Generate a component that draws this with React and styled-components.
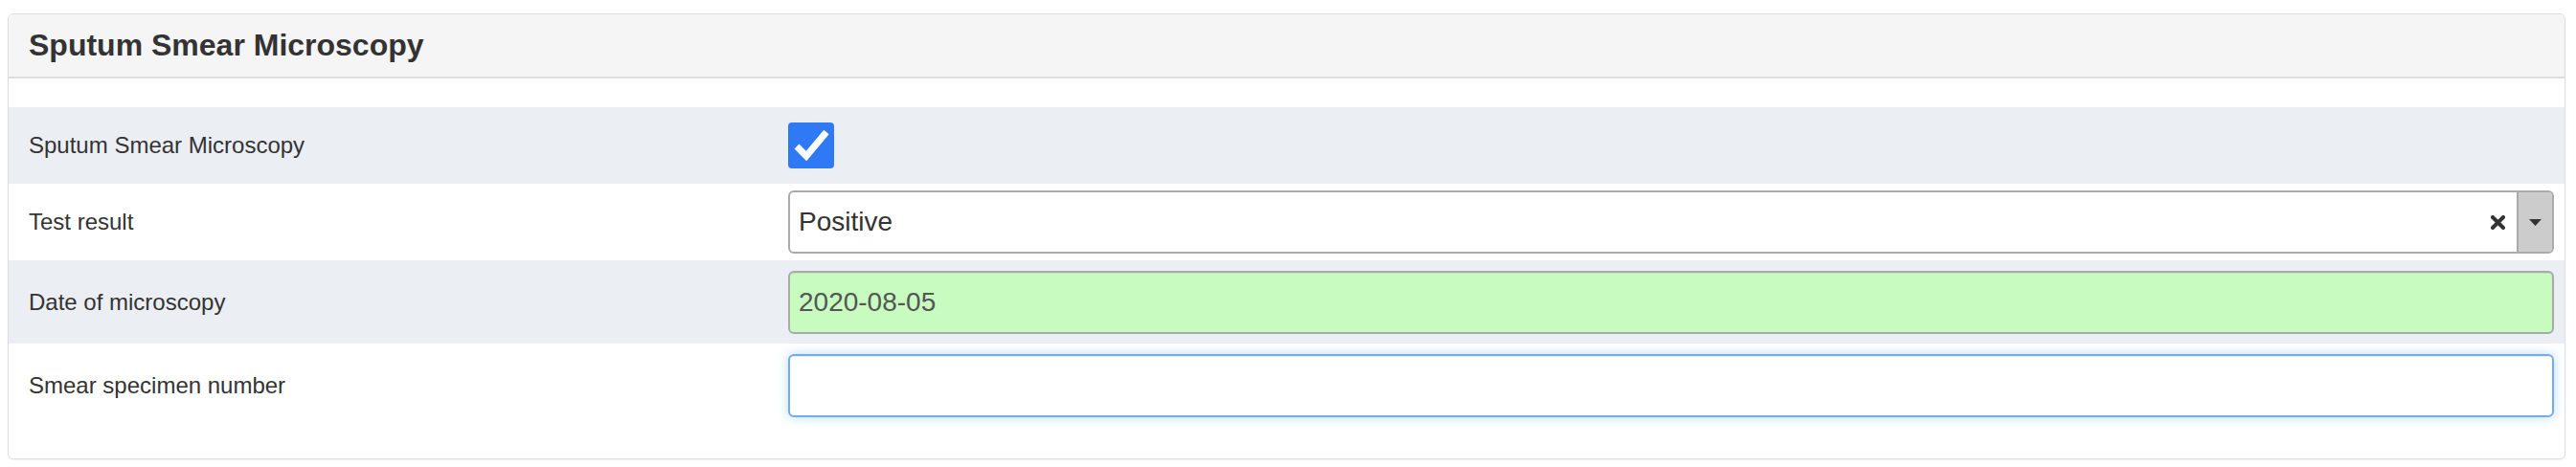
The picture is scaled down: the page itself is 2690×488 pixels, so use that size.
import React from "react";
import styled, { createGlobalStyle } from "styled-components";

const GlobalStyle = createGlobalStyle`
    body {
        margin: 0;
        background: #ffffff;
        font-family: "Liberation Sans", Arial, sans-serif;
        color: #333333;
    }
`;

const Page = styled.div`
    padding: 14px 11px 8px 8px;
`;

const Panel = styled.div`
    border: 1px solid #dddddd;
    border-radius: 6px;
    background: #ffffff;
    box-shadow: 0 1px 2px rgba(0, 0, 0, 0.05);
    overflow: hidden;
`;

const PanelHeading = styled.div`
    display: flex;
    align-items: center;
    height: 65px;
    padding: 0 21px;
    background: #f5f5f5;
    border-bottom: 2px solid #dddddd;
    font-size: 32px;
    font-weight: 700;
    color: #333333;
`;

const PanelBody = styled.div`
    padding: 30px 0 32px;
`;

const Row = styled.div`
    display: grid;
    grid-template-columns: 814px 1fr;
    align-items: center;
    min-height: ${({ $height }) => $height}px;
    background: ${({ $shaded }) => ($shaded ? "#ebeef3" : "#ffffff")};
`;

const Label = styled.div`
    padding-left: 21px;
    font-size: 24px;
    color: #333333;
`;

const Control = styled.div`
    display: flex;
    align-items: center;
    padding-right: 11px;
`;

const CheckBox = styled.div`
    width: 48px;
    height: 48px;
    border-radius: 4px;
    background: #2f79f5;
    display: flex;
    align-items: center;
    justify-content: center;
`;

const Select = styled.div`
    flex: 1;
    display: flex;
    height: 66px;
    box-sizing: border-box;
    border: 2px solid #aaaaaa;
    border-radius: 6px;
    background: #ffffff;
    overflow: hidden;
`;

const SelectValue = styled.div`
    flex: 1;
    display: flex;
    align-items: center;
    padding-left: 9px;
    font-size: 28px;
    color: #333333;
`;

const ClearButton = styled.div`
    display: flex;
    align-items: center;
    padding: 0 12px;
`;

const ArrowButton = styled.div`
    width: 35px;
    display: flex;
    align-items: center;
    justify-content: center;
    background: #cccccc;
    border-left: 2px solid #aaaaaa;
`;

const TextInput = styled.input`
    flex: 1;
    height: 66px;
    box-sizing: border-box;
    padding: 0 9px;
    border: 2px solid ${({ $focused }) => ($focused ? "#72aceb" : "#aaaaaa")};
    border-radius: 6px;
    background: ${({ $valid }) => ($valid ? "#c7fbc0" : "#ffffff")};
    font-family: "Liberation Sans", Arial, sans-serif;
    font-size: 28px;
    color: #555555;
    outline: none;
    box-shadow: ${({ $focused }) =>
        $focused ? "inset 0 1px 1px rgba(0,0,0,.075), 0 0 12px rgba(102,175,233,.45)" : "inset 0 1px 1px rgba(0,0,0,.075)"};
`;

const CheckIcon = () => (
    <svg width="48" height="48" viewBox="0 0 48 48">
        <path d="M9 25 L19 35 L40 10" fill="none" stroke="#ffffff" strokeWidth="7" strokeLinejoin="miter" />
    </svg>
);

const ClearIcon = () => (
    <svg width="15" height="15" viewBox="0 0 15 15">
        <path d="M2 2 L13 13 M13 2 L2 13" stroke="#333333" strokeWidth="4" strokeLinecap="round" />
    </svg>
);

const CaretIcon = () => (
    <svg width="13" height="7" viewBox="0 0 13 7">
        <path d="M0 0 L13 0 L6.5 7 Z" fill="#333333" />
    </svg>
);

const App = () => (
    <>
        <GlobalStyle />
        <Page>
            <Panel>
                <PanelHeading>Sputum Smear Microscopy</PanelHeading>
                <PanelBody>
                    <Row $shaded $height={80}>
                        <Label>Sputum Smear Microscopy</Label>
                        <Control>
                            <CheckBox>
                                <CheckIcon />
                            </CheckBox>
                        </Control>
                    </Row>
                    <Row $height={80}>
                        <Label>Test result</Label>
                        <Control>
                            <Select>
                                <SelectValue>Positive</SelectValue>
                                <ClearButton>
                                    <ClearIcon />
                                </ClearButton>
                                <ArrowButton>
                                    <CaretIcon />
                                </ArrowButton>
                            </Select>
                        </Control>
                    </Row>
                    <Row $shaded $height={87}>
                        <Label>Date of microscopy</Label>
                        <Control>
                            <TextInput $valid defaultValue="2020-08-05" />
                        </Control>
                    </Row>
                    <Row $height={88}>
                        <Label>Smear specimen number</Label>
                        <Control>
                            <TextInput $focused defaultValue="" />
                        </Control>
                    </Row>
                </PanelBody>
            </Panel>
        </Page>
    </>
);

export default App;
